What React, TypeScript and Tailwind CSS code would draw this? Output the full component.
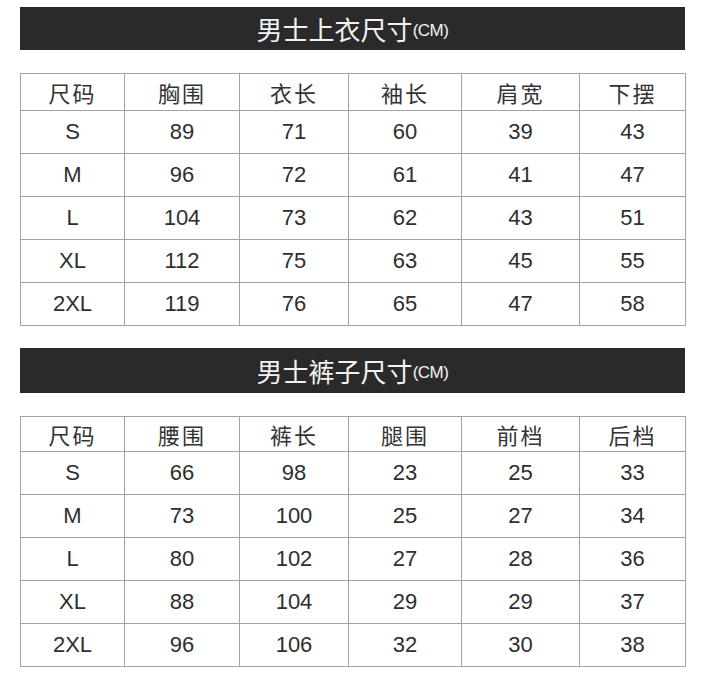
import { FC } from 'react';

type Table = {
  title: string;
  head: string[];
  rows: (string | number)[][];
  headH: string;
};

const widths = [104, 115, 109, 113, 118, 106];

const tables: Table[] = [
  {
    title: '男士上衣尺寸',
    head: ['尺码', '胸围', '衣长', '袖长', '肩宽', '下摆'],
    headH: 'h-[37px]',
    rows: [
      ['S', 89, 71, 60, 39, 43],
      ['M', 96, 72, 61, 41, 47],
      ['L', 104, 73, 62, 43, 51],
      ['XL', 112, 75, 63, 45, 55],
      ['2XL', 119, 76, 65, 47, 58],
    ],
  },
  {
    title: '男士裤子尺寸',
    head: ['尺码', '腰围', '裤长', '腿围', '前档', '后档'],
    headH: 'h-[35px]',
    rows: [
      ['S', 66, 98, 23, 25, 33],
      ['M', 73, 100, 25, 27, 34],
      ['L', 80, 102, 27, 28, 36],
      ['XL', 88, 104, 29, 29, 37],
      ['2XL', 96, 106, 32, 30, 38],
    ],
  },
];

const cjk = "font-['Noto_Sans_CJK_SC','Noto_Sans',sans-serif]";
const num = "font-['Liberation_Sans',Arial,sans-serif]";

const TitleBar: FC<{ title: string; h: string }> = ({ title, h }) => (
  <div className={`${h} w-[665px] bg-[#2a2a2a] flex items-center justify-center`}>
    <span className={`${cjk} text-[26px] leading-none text-[#f2f2f2]`}>{title}</span>
    <span className={`${num} text-[17px] leading-none text-[#f2f2f2] mt-[4px] tracking-[-0.5px]`}>
      (CM)
    </span>
  </div>
);

const SizeTable: FC<{ t: Table }> = ({ t }) => (
  <table className="w-[665px] table-fixed border-collapse border-[1.5px] border-[#a3a3a3]">
    <colgroup>
      {widths.map((w, i) => (
        <col key={i} style={{ width: w }} />
      ))}
    </colgroup>
    <thead>
      <tr className={t.headH}>
        {t.head.map((h) => (
          <th
            key={h}
            className={`${cjk} border-[1.5px] border-[#a3a3a3] p-0 text-center text-[22px] font-normal leading-none tracking-[2px] text-[#333]`}
          >
            {h}
          </th>
        ))}
      </tr>
    </thead>
    <tbody>
      {t.rows.map((r) => (
        <tr key={r[0]} className="h-[43px]">
          {r.map((c, i) => (
            <td
              key={i}
              className={`${num} border-[1.5px] border-[#a3a3a3] p-0 text-center text-[22px] leading-none text-[#2e2e2e]`}
            >
              {c}
            </td>
          ))}
        </tr>
      ))}
    </tbody>
  </table>
);

export default function App() {
  return (
    <div className="w-[703px] h-[675px] bg-white pt-[7px] pl-[20px] overflow-hidden">
      <TitleBar title={tables[0].title} h="h-[43px]" />
      <div className="mt-[23px]">
        <SizeTable t={tables[0]} />
      </div>
      <div className="mt-[22px]">
        <TitleBar title={tables[1].title} h="h-[45px]" />
      </div>
      <div className="mt-[23px]">
        <SizeTable t={tables[1]} />
      </div>
    </div>
  );
}
